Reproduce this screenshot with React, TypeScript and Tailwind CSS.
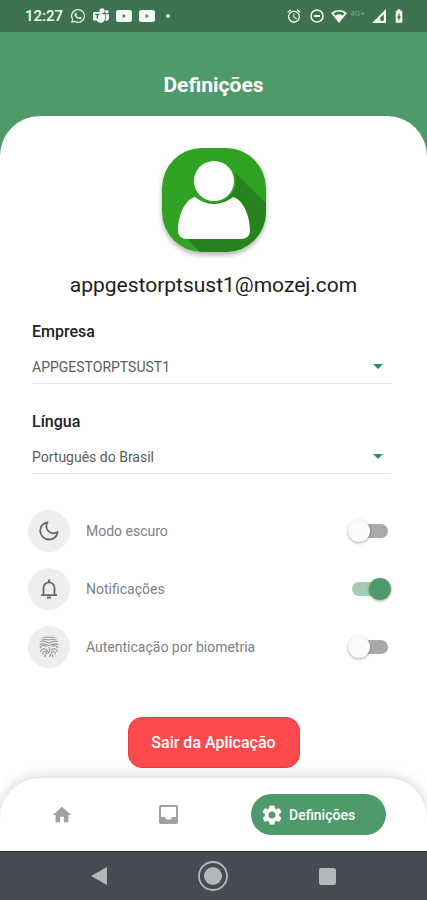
import { useState } from "react";
import type { ReactNode } from "react";
import { MdAccessAlarm, MdBatteryChargingFull, MdHome, MdSettings } from "react-icons/md";
import { FaWhatsapp } from "react-icons/fa";

interface SelectFieldProps {
    id: string;
    label: string;
    options: string[];
}

interface ToggleRowProps {
    id: string;
    label: string;
    icon: ReactNode;
    defaultOn?: boolean;
}

const VideoIcon = () => (
    <svg className="w-4 h-3" viewBox="0 0 16 12" fill="currentColor">
        <path
            fillRule="evenodd"
            d="M2.5 0h11A2.5 2.5 0 0 1 16 2.5v7a2.5 2.5 0 0 1-2.5 2.5h-11A2.5 2.5 0 0 1 0 9.5v-7A2.5 2.5 0 0 1 2.5 0zM6.7 4.100v3.800L10 6z"
        />
    </svg>
);

const TeamsIcon = () => (
    <svg className="w-4 h-4" viewBox="0 0 16 16" fill="currentColor">
        <circle cx="9" cy="2.800" r="2.600" />
        <circle cx="13.700" cy="3.700" r="1.800" />
        <path d="M12.800 6.200H16V10a3 3 0 0 1-3.400 3z" />
        <path
            fillRule="evenodd"
            d="M1 4h6.500a1 1 0 0 1 1 1v1.200H12V11a4.500 4.500 0 0 1-8.400 1.500H1a1 1 0 0 1-1-1V5a1 1 0 0 1 1-1zM2.200 5.800v1.200h1.400v3.800h1.300V7h1.400V5.800z"
        />
    </svg>
);

const StatusBar = () => (
    <div className="h-8 flex items-center justify-between pl-[25px] pr-[19px] bg-[#3d734f] text-[#f4faf5]">
        <div className="flex items-center gap-[7px]">
            <span className="text-[15px] leading-5 font-medium">12:27</span>
            <FaWhatsapp className="w-4 h-4" />
            <TeamsIcon />
            <VideoIcon />
            <VideoIcon />
            <span className="w-1 h-1 ml-1 rounded-full bg-current" />
        </div>
        <div className="flex items-center">
            <MdAccessAlarm className="w-4 h-4" />
            <svg className="w-[14px] h-[14px] ml-2" viewBox="0 0 14 14" fill="none" stroke="currentColor">
                <circle cx="7" cy="7" r="6" strokeWidth="1.6" />
                <path d="M4 7h6" strokeWidth="2" />
            </svg>
            <svg className="w-4 h-[14px] ml-[7px]" viewBox="0 0 16 14">
                <path
                    fill="currentColor"
                    fillRule="evenodd"
                    d="M0 4a12 12 0 0 1 16 0L8 14zM2.600 4.300 4.200 6.400a7 7 0 0 1 7.600 0l1.600-2.100a9.500 9.500 0 0 0-10.800 0z"
                />
            </svg>
            <span className="w-[21px] text-[8px] leading-4 -mt-1 text-center text-[#7fa78b]">4G+</span>
            <svg className="w-[14px] h-[14px] ml-1" viewBox="0 0 14 14">
                <path fill="currentColor" fillRule="evenodd" d="M14 0v14H0zM11.800 5.200V11.800H8.200V8.800z" />
            </svg>
            <MdBatteryChargingFull className="w-[18px] h-4 ml-1" />
        </div>
    </div>
);

const Avatar = () => (
    <svg className="w-[104px] h-[104px] rounded-[40px] shadow-[0_3px_5px_rgba(0,0,0,0.3)]" viewBox="0 0 104 104">
        <rect width="104" height="104" fill="#31a324" />
        <path d="M66 18 104 55v49H38L22 88z" fill="#26821d" />
        <path
            d="M33 49c-11 3-17 20-17 34 0 5 4 8 9 8h54c5 0 9-3 9-8 0-14-6-31-17-34-5 4-12 7-19 7s-14-3-19-7z"
            fill="#fff"
        />
        <circle cx="52" cy="33" r="22" fill="#31a324" />
        <circle cx="52" cy="33" r="20" fill="#fff" />
    </svg>
);

const SelectField = ({ id, label, options }: SelectFieldProps) => (
    <div>
        <label htmlFor={id} className="block text-base leading-5 font-medium text-[#222]">
            {label}
        </label>
        <div className="relative mt-2">
            <select
                id={id}
                className="block w-full h-[34px] appearance-none border-b border-[#e4e4e4] bg-transparent text-sm text-[#5c5c5c] outline-none"
            >
                {options.map((option) => (
                    <option key={option}>{option}</option>
                ))}
            </select>
            <svg className="absolute right-2 top-[14px] w-[10px] h-[5px] pointer-events-none" viewBox="0 0 10 5">
                <path d="M0 0h10L5 5z" fill="#2f8f5b" />
            </svg>
        </div>
    </div>
);

const ToggleRow = ({ id, label, icon, defaultOn = false }: ToggleRowProps) => {
    const [on, setOn] = useState(defaultOn);

    return (
        <div className="flex items-center">
            <span className="w-[42px] h-[42px] flex items-center justify-center rounded-full bg-[#eeeeee] text-[#5f6972]">
                {icon}
            </span>
            <label htmlFor={id} className="flex-1 ml-4 text-sm text-[#7b8187]">
                {label}
            </label>
            <input
                id={id}
                type="checkbox"
                role="switch"
                checked={on}
                onChange={() => setOn(!on)}
                className="relative w-9 h-[14px] appearance-none rounded-full bg-[#a9a9a9] checked:bg-[#a3cdb2] before:absolute before:-top-1 before:-left-1 before:w-[22px] before:h-[22px] before:rounded-full before:bg-[#fafafa] before:shadow-[0_1px_3px_rgba(0,0,0,0.35)] checked:before:left-[17px] checked:before:bg-[#4f9a6a]"
            />
        </div>
    );
};

const MoonIcon = () => (
    <svg className="w-5 h-5" viewBox="0 0 20 20" fill="none" stroke="currentColor" strokeWidth="1.800" strokeLinejoin="round">
        <path d="M8.500 1.300C4.200 1.900 1.200 5.500 1.200 9.800a8.700 8.700 0 0 0 8.700 8.700c4.300 0 8-3 8.800-7.400-1.300.900-2.700 1.400-4.200 1.300-4-.100-7.200-3.400-7.200-7.200 0-1.400.400-2.800 1.200-3.900z" />
    </svg>
);

const BellIcon = () => (
    <svg className="w-5 h-5" viewBox="0 0 20 20" fill="none" stroke="currentColor" strokeWidth="1.800">
        <path d="M2 16.200h16M4.500 16V8.800a5.500 5.500 0 0 1 11 0V16" />
        <path d="M10 .500v3" strokeWidth="2.200" />
        <path d="M8 18.500h4" strokeWidth="2" />
    </svg>
);

const FingerprintIcon = () => (
    <svg className="w-[22px] h-[22px] text-[#92989d]" viewBox="0 0 22 22" fill="none" stroke="currentColor" strokeWidth="1.100" strokeLinecap="round">
        <path d="M5.500 1.200h11M4 3c4.500 1 9.500 1 14 0M2.500 5.500C7 4 9 7 11 7s4-3 8.500-1.500" />
        <path d="M2 8.500c4-2 6.500 1 9 1s5-3 9-1M2 12c2-3 4-3 6-1.500M20 12c-2-3-4-3-6-1.500" />
        <path d="M2.500 15.500C4 12 6.500 12 8.500 14M19.500 15.500C18 12 15.500 12 13.500 14M11 11.500c2.500 2 .500 4-1 6" />
        <path d="M4.500 18c.500-3 2.500-3 4-1.500M17.500 18c-.500-3-2.500-3-4-1.500l-2 4M7 20.500l2.500-6M15 20.500l-1-1.500" />
    </svg>
);

const BottomNav = () => (
    <nav className="h-[73px] flex items-center justify-between pl-[38px] pr-[41px] rounded-t-[40px] bg-white shadow-[0_-2px_12px_rgba(0,0,0,0.16)]">
        <button aria-label="Início" className="w-12 h-10 flex items-center justify-center text-[#9da2a7]">
            <MdHome className="w-[22px] h-[22px]" />
        </button>
        <button aria-label="Caixa de entrada" className="w-12 h-10 flex items-center justify-center text-[#9da2a7]">
            <svg className="w-[19px] h-[19px]" viewBox="0 0 19 19">
                <path
                    fill="currentColor"
                    fillRule="evenodd"
                    d="M2 0h15a2 2 0 0 1 2 2v15a2 2 0 0 1-2 2H2a2 2 0 0 1-2-2V2a2 2 0 0 1 2-2zM2 2v10h4a3.600 3.600 0 0 0 7 0h4V2z"
                />
            </svg>
        </button>
        <button aria-current="page" className="w-[135px] h-[41px] flex items-center gap-[5px] pl-[9px] rounded-full bg-[#4f9a6a] text-sm font-medium text-white">
            <MdSettings className="w-6 h-6" />
            Definições
        </button>
    </nav>
);

const SystemNav = () => (
    <div className="h-[49px] grid grid-cols-3 items-center justify-items-center px-[42px] border-t border-[#22323a] bg-[#454b50] text-[#b4b8ba]">
        <button aria-label="Voltar">
            <svg className="w-4 h-[18px]" viewBox="0 0 16 18">
                <path d="M16 0v18L0 9z" fill="currentColor" />
            </svg>
        </button>
        <button aria-label="Ecrã inicial">
            <svg className="w-[30px] h-[30px]" viewBox="0 0 30 30">
                <circle cx="15" cy="15" r="14" fill="none" stroke="currentColor" strokeWidth="1.800" />
                <circle cx="15" cy="15" r="9" fill="currentColor" />
            </svg>
        </button>
        <button aria-label="Recentes">
            <span className="block w-[17px] h-[17px] rounded-[2px] bg-current" />
        </button>
    </div>
);

const App = () => {
    return (
        <div className="min-h-screen flex flex-col bg-white font-['Roboto',sans-serif]">
            <StatusBar />
            <header className="pt-[41px] pb-[70px] bg-[#4f9a6a] text-center">
                <h1 className="text-[21px] leading-6 font-bold text-white">Definições</h1>
            </header>

            <main className="flex-1 flex flex-col items-center -mt-[51px] pt-8 pb-[10px] rounded-t-[40px] bg-white">
                <Avatar />
                <p className="mt-[21px] text-[21px] leading-6 text-[#1c1c1c]">appgestorptsust1@mozej.com</p>

                <div className="w-full flex flex-col gap-7 mt-[25px] pl-8 pr-9">
                    <SelectField id="empresa" label="Empresa" options={["APPGESTORPTSUST1"]} />
                    <SelectField
                        id="lingua"
                        label="Língua"
                        options={["Português do Brasil", "Português", "English"]}
                    />
                </div>

                <div className="w-full flex flex-col gap-4 mt-9 pl-7 pr-[39px]">
                    <ToggleRow id="dark" label="Modo escuro" icon={<MoonIcon />} />
                    <ToggleRow id="notifications" label="Notificações" icon={<BellIcon />} defaultOn />
                    <ToggleRow id="biometrics" label="Autenticação por biometria" icon={<FingerprintIcon />} />
                </div>

                <button className="w-[172px] h-[51px] mt-auto rounded-[14px] border border-[#f23a3f] bg-[#fe4a4e] text-base font-medium text-white">
                    Sair da Aplicação
                </button>
            </main>

            <BottomNav />
            <SystemNav />
        </div>
    );
};

export default App;
